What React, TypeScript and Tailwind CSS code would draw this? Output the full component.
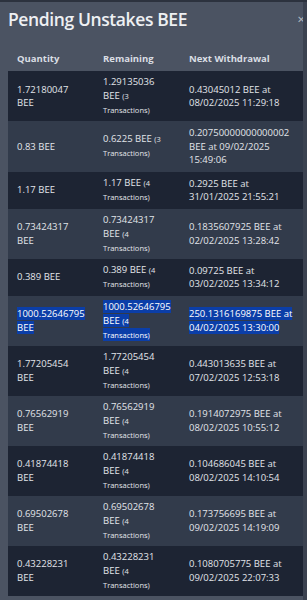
import React from "react";

type Row = {
  qty: string;
  rem: string;
  tx: number;
  next: string;
  selected?: boolean;
};

const rows: Row[] = [
  { qty: "1.72180047 BEE", rem: "1.29135036 BEE", tx: 3, next: "0.43045012 BEE at 08/02/2025 11:29:18" },
  { qty: "0.83 BEE", rem: "0.6225 BEE", tx: 3, next: "0.20750000000000002 BEE at 09/02/2025 15:49:06" },
  { qty: "1.17 BEE", rem: "1.17 BEE", tx: 4, next: "0.2925 BEE at 31/01/2025 21:55:21" },
  { qty: "0.73424317 BEE", rem: "0.73424317 BEE", tx: 4, next: "0.1835607925 BEE at 02/02/2025 13:28:42" },
  { qty: "0.389 BEE", rem: "0.389 BEE", tx: 4, next: "0.09725 BEE at 03/02/2025 13:34:12" },
  { qty: "1000.52646795 BEE", rem: "1000.52646795 BEE", tx: 4, next: "250.1316169875 BEE at 04/02/2025 13:30:00", selected: true },
  { qty: "1.77205454 BEE", rem: "1.77205454 BEE", tx: 4, next: "0.443013635 BEE at 07/02/2025 12:53:18" },
  { qty: "0.76562919 BEE", rem: "0.76562919 BEE", tx: 4, next: "0.1914072975 BEE at 08/02/2025 10:55:12" },
  { qty: "0.41874418 BEE", rem: "0.41874418 BEE", tx: 4, next: "0.104686045 BEE at 08/02/2025 14:10:54" },
  { qty: "0.69502678 BEE", rem: "0.69502678 BEE", tx: 4, next: "0.173756695 BEE at 09/02/2025 14:19:09" },
  { qty: "0.43228231 BEE", rem: "0.43228231 BEE", tx: 4, next: "0.1080705775 BEE at 09/02/2025 22:07:33" },
];

const sel = "bg-[#0b3ea8] text-white";

export default function App() {
  return (
    <div className="min-h-screen bg-[#4b5362] font-['Open_Sans',sans-serif] border-t-2 border-[#2c323e] flex">
      <div className="flex-1 pl-2 min-w-0">
        <div className="flex items-center justify-between h-[34px]">
          <h1 className="text-[17.5px] font-semibold text-[#eef0f3] tracking-[-0.4px]">Pending Unstakes BEE</h1>
          <span className="text-[#aeb4bd] text-[10px] leading-none -mr-[2px]">✕</span>
        </div>
        <table className="w-full table-fixed border-collapse">
          <colgroup>
            <col className="w-[86px]" />
            <col className="w-[86px]" />
            <col />
          </colgroup>
          <thead>
            <tr className="text-left text-[9.5px] leading-[13px] text-[#dadee4]">
              <th className="h-[35px] align-bottom px-[9px] pb-[6px] font-bold">Quantity</th>
              <th className="h-[35px] align-bottom px-[9px] pb-[6px] font-bold">Remaining</th>
              <th className="h-[35px] align-bottom px-[9px] pb-[6px] font-bold">Next Withdrawal</th>
            </tr>
          </thead>
          <tbody>
            {rows.map((r, i) => (
              <tr
                key={i}
                className={`${i % 2 === 0 ? "bg-[#1d2433]" : "bg-[#323b4b]"} text-[9.5px] text-[#e2e5ea]`}
              >
                <td className="px-[9px] py-[5px] align-middle leading-[13.5px]">
                  <span className={r.selected ? sel : ""}>{r.qty}</span>
                </td>
                <td className="px-[9px] py-[4px] align-middle leading-[13px]">
                  <span className={r.selected ? sel : ""}>
                    <span className="leading-[14px]">{r.rem}</span>{" "}
                    <span className="text-[7.5px] leading-[13px]">({r.tx} Transactions)</span>
                  </span>
                </td>
                <td className="px-[9px] py-[5px] align-middle leading-[13.5px]">
                  <span className={r.selected ? sel : ""}>{r.next}</span>
                </td>
              </tr>
            ))}
          </tbody>
        </table>
      </div>
      <div className="w-[4px] bg-[#3b4250]" />
    </div>
  );
}
